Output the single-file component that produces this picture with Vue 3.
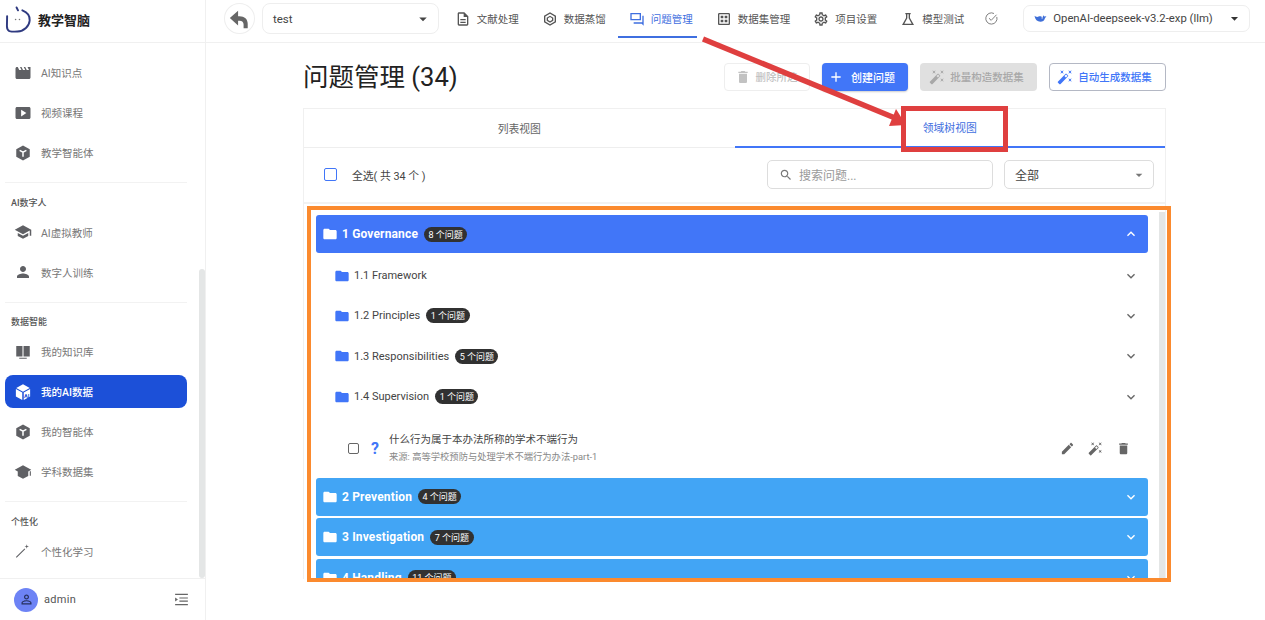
<template>
  <div class="app">
    <aside class="sidebar">
      <div class="brand">
        <svg class="logo" viewBox="0 0 28 28" fill="none">
          <path d="M12 1.5l1.5 3" stroke="#2f3a80" stroke-width="2" stroke-linecap="round" />
          <path d="M18 4.5c5 2 8 6 7.6 10.5C25 21 20 26 13 26.5c-3 .2-6 .2-8.5-.5C2.5 25 2 23.5 2 21l.2-10.5" stroke="#2f3a80" stroke-width="2" stroke-linecap="round" />
          <circle cx="11" cy="14" r=".8" fill="#777" />
          <circle cx="15" cy="14" r=".8" fill="#777" />
        </svg>
        <span class="brand-name">教学智脑</span>
      </div>

      <nav class="side-nav">
        <template v-for="(group, i) in sideGroups" :key="i">
          <div v-if="i > 0" class="side-divider"></div>
          <div v-if="group.title" class="side-title">{{ group.title }}</div>
          <div
            v-for="item in group.items"
            :key="item.label"
            :class="['side-item', { active: item.active }]"
          >
            <svg class="side-icon" viewBox="0 0 24 24" fill="currentColor">
              <path :d="icons[item.icon]" />
              <path v-if="item.icon === 'hex'" d="M7.5 8.5 12 11l4.5-2.5M12 11v6" fill="none" stroke="#fff" stroke-width="2" />
              <text v-if="item.icon === 'cube'" x="13.4" y="20" class="cube-text">AI</text>
            </svg>
            <span>{{ item.label }}</span>
          </div>
        </template>
      </nav>

      <div class="side-scroll"></div>

      <div class="side-footer">
        <div class="avatar">
          <svg viewBox="0 0 24 24" fill="#26305e"><path :d="icons.personOutline" /></svg>
        </div>
        <span class="user-name">admin</span>
        <svg class="collapse" viewBox="0 0 24 24" fill="#666">
          <path d="M3 4h18v1.6H3zM9 9h12v1.6H9zM9 13.5h12v1.6H9zM3 18.4h18V20H3zM3 9.2v5.6l4-2.8z" />
        </svg>
      </div>
    </aside>

    <div class="main">
      <header class="topbar">
        <button class="back-btn">
          <svg viewBox="0 0 24 24" fill="#666"><path :d="icons.reply" /></svg>
        </button>
        <div class="project-select">
          <span>test</span>
          <svg viewBox="0 0 24 24" fill="#444"><path :d="icons.dropdown" /></svg>
        </div>
        <div class="top-tabs">
          <div
            v-for="tab in topTabs"
            :key="tab.label"
            :class="['top-tab', { active: tab.active }]"
          >
            <svg viewBox="0 0 24 24" fill="currentColor" fill-rule="evenodd"><path :d="icons[tab.icon]" /></svg>
            <span>{{ tab.label }}</span>
          </div>
        </div>
        <svg class="check-icon" viewBox="0 0 24 24" fill="none" stroke="#777" stroke-width="1.5">
          <path d="M20.5 9.5A9 9 0 1 1 16 4" />
          <path d="M8 11.5l3.5 3.5L20 6" />
        </svg>
        <div class="model-select">
          <svg class="whale" viewBox="0 0 24 24" fill="#3f6fd8">
            <path d="M1 7c1 7 5 11 11 11 4 0 7-2 8-6 1-2 2-3 3-4l-4 .5-1.5-2.5c-1 2-1 3-2 4-1.5-2-5-3-7-1.5C6 10 3 9 1 7z" />
            <circle cx="15" cy="11" r="1.2" fill="#fff" />
          </svg>
          <span>OpenAI-deepseek-v3.2-exp (llm)</span>
          <svg class="caret" viewBox="0 0 24 24" fill="#333"><path :d="icons.dropdown" /></svg>
        </div>
      </header>

      <section class="content">
        <div class="title-row">
          <h1>问题管理 (34)</h1>
          <div class="actions">
            <button class="btn btn-ghost">
              <svg viewBox="0 0 24 24" fill="currentColor"><path :d="icons.trash" /></svg>删除所选
            </button>
            <button class="btn btn-primary">
              <svg viewBox="0 0 24 24" fill="currentColor"><path :d="icons.plus" /></svg>创建问题
            </button>
            <button class="btn btn-disabled">
              <svg viewBox="0 0 24 24" fill="currentColor"><path :d="icons.wand" /></svg>批量构造数据集
            </button>
            <button class="btn btn-outline">
              <svg viewBox="0 0 24 24" fill="currentColor"><path :d="icons.wand" /></svg>自动生成数据集
            </button>
          </div>
        </div>

        <div class="card">
          <div class="view-tabs">
            <div class="view-tab">列表视图</div>
            <div class="view-tab active">领域树视图</div>
          </div>

          <div class="toolbar">
            <span class="check-all"></span>
            <span class="all-label">全选( 共 34 个 )</span>
            <div class="search">
              <svg viewBox="0 0 24 24" fill="#777"><path :d="icons.search" /></svg>
              <span>搜索问题...</span>
            </div>
            <div class="filter">
              <span>全部</span>
              <svg viewBox="0 0 24 24" fill="#777"><path :d="icons.dropdown" /></svg>
            </div>
          </div>

          <div class="tree">
            <div class="tree-scroll"></div>

            <div class="acc-head open">
              <svg class="folder" viewBox="0 0 24 24" fill="currentColor"><path :d="icons.folder" /></svg>
              <span class="acc-name">1 Governance</span>
              <span class="chip">8 个问题</span>
              <svg class="chev" viewBox="0 0 24 24" fill="currentColor"><path :d="icons.less" /></svg>
            </div>

            <div v-for="sub in subNodes" :key="sub.name" class="sub-row">
              <svg class="folder" viewBox="0 0 24 24" fill="currentColor"><path :d="icons.folder" /></svg>
              <span class="sub-name">{{ sub.name }}</span>
              <span v-if="sub.count" class="chip">{{ sub.count }} 个问题</span>
              <svg class="chev" viewBox="0 0 24 24" fill="currentColor"><path :d="icons.more" /></svg>
            </div>

            <div class="question">
              <span class="q-check"></span>
              <span class="q-mark">?</span>
              <div class="q-body">
                <div class="q-text">什么行为属于本办法所称的学术不端行为</div>
                <div class="q-source">来源: 高等学校预防与处理学术不端行为办法-part-1</div>
              </div>
              <div class="q-actions">
                <svg viewBox="0 0 24 24" fill="currentColor"><path :d="icons.pencil" /></svg>
                <svg viewBox="0 0 24 24" fill="currentColor"><path :d="icons.wand" /></svg>
                <svg viewBox="0 0 24 24" fill="currentColor"><path :d="icons.trash" /></svg>
              </div>
            </div>

            <div v-for="node in closedNodes" :key="node.name" class="acc-head">
              <svg class="folder" viewBox="0 0 24 24" fill="currentColor"><path :d="icons.folder" /></svg>
              <span class="acc-name">{{ node.name }}</span>
              <span class="chip">{{ node.count }} 个问题</span>
              <svg class="chev" viewBox="0 0 24 24" fill="currentColor"><path :d="icons.more" /></svg>
            </div>
          </div>
        </div>
      </section>
    </div>

    <!-- annotations drawn on top of the screenshot -->
    <svg class="arrow" viewBox="0 0 1265 620">
      <path d="M703 39 895 118" stroke="#df3f3f" stroke-width="5.5" fill="none" />
      <path d="M906 125 889 126 896 109z" fill="#df3f3f" />
    </svg>
    <div class="mark-red"></div>
    <div class="mark-orange"></div>
  </div>
</template>

<script setup>
const icons = {
  movie: 'M18 4l2 4h-3l-2-4h-2l2 4h-3l-2-4H8l2 4H7L5 4H4c-1.1 0-1.99.9-1.99 2L2 18c0 1.1.9 2 2 2h16c1.1 0 2-.9 2-2V4h-4z',
  video: 'M20 4H4c-1.1 0-2 .9-2 2v12c0 1.1.9 2 2 2h16c1.1 0 2-.9 2-2V6c0-1.1-.9-2-2-2zM9.5 16.5v-9l7 4.5-7 4.5z',
  hex: 'M12 2 3 7v10l9 5 9-5V7z',
  school: 'M5 13.18v4L12 21l7-3.82v-4L12 17l-7-3.82zM12 3L1 9l11 6 9-4.91V17h2V9L12 3z',
  person: 'M12 12c2.21 0 4-1.79 4-4s-1.79-4-4-4-4 1.79-4 4 1.79 4 4 4zm0 2c-2.67 0-8 1.34-8 4v2h16v-2c0-2.66-5.33-4-8-4z',
  book: 'M3 4h8.3v14H3zM12.7 4H21v14h-8.3zM7 19.5h10V21H7z',
  cube: 'M12 1.5 3 6.5l9 5 9-5zM2.5 8v10l8.5 4.5v-10zM21.5 8 13 12.5v10l8.5-4.5z',
  cap: 'M12 3 1 9l4 2.2v6L12 21l7-3.8v-6L23 9zM21 11v6h1.5v-6z',
  wandThin: 'M3.5 21 2.5 20 14 8.5l1 1zM17 3l.7 2.3L20 6l-2.3.7L17 9l-.7-2.3L14 6l2.3-.7z',
  wand: 'M7.5 5.6L10 7 8.6 4.5 10 2 7.5 3.4 5 2l1.4 2.5L5 7zm12 9.8L17 14l1.4 2.5L17 19l2.5-1.4L22 19l-1.4-2.5L22 14zM22 2l-2.5 1.4L17 2l1.4 2.5L17 7l2.5-1.4L22 7l-1.4-2.5zm-7.63 5.29c-.39-.39-1.02-.39-1.41 0L1.29 18.96c-.39.39-.39 1.02 0 1.41l2.34 2.34c.39.39 1.02.39 1.41 0L16.7 11.05c.39-.39.39-1.02 0-1.41l-2.33-2.35zm-1.03 5.49l-2.12-2.12 2.44-2.44 2.12 2.12-2.44 2.44z',
  personOutline: 'M12 5.9c1.16 0 2.1.94 2.1 2.1s-.94 2.1-2.1 2.1S9.9 9.16 9.9 8s.94-2.1 2.1-2.1m0 9c2.97 0 6.1 1.46 6.1 2.1v1.1H5.9V17c0-.64 3.13-2.1 6.1-2.1M12 4C9.79 4 8 5.79 8 8s1.79 4 4 4 4-1.79 4-4-1.79-4-4-4zm0 9c-2.67 0-8 1.34-8 4v3h16v-3c0-2.66-5.33-4-8-4z',
  reply: 'M11 3 2 11l9 8v-5h1.5c3 0 4.5 1.5 4.5 4v4h4.5v-4.5c0-5.5-3.5-8.5-9-8.5H11z',
  dropdown: 'M7 10l5 5 5-5z',
  doc: 'M14 2H6c-1.1 0-2 .9-2 2v16c0 1.1.9 2 2 2h12c1.1 0 2-.9 2-2V8l-6-6zm4 18H6V4h7v5h5v11zM8 12h8v2H8zm0 4h8v2H8z',
  box: 'M12 2 3 7v10l9 5 9-5V7zM12 4.3 19 8.2v7.6l-7 3.9-7-3.9V8.2zM12 7l-5 3v4.5l5 3 5-3V10zM12 9l-3 2v2.5l3 2 3-2V11z',
  chat: 'M2 3h16v11H2zm2 2v7h12V5zM20 7h2v15l-3-3H7v-2h13z',
  grid: 'M19 3H5c-1.1 0-2 .9-2 2v14c0 1.1.9 2 2 2h14c1.1 0 2-.9 2-2V5c0-1.1-.9-2-2-2zm0 16H5V5h14zM7 7h4v4H7zm6 0h4v4h-4zm-6 6h4v4H7zm6 0h4v4h-4z',
  gear: 'M19.43 12.98c.04-.32.07-.64.07-.98 0-.34-.03-.66-.07-.98l2.11-1.65c.19-.15.24-.42.12-.64l-2-3.46c-.09-.16-.26-.25-.44-.25-.06 0-.12.01-.17.03l-2.49 1c-.52-.4-1.08-.73-1.69-.98l-.38-2.65C14.46 2.18 14.25 2 14 2h-4c-.25 0-.46.18-.49.42l-.38 2.65c-.61.25-1.17.59-1.69.98l-2.49-1c-.06-.02-.12-.03-.18-.03-.17 0-.34.09-.43.25l-2 3.46c-.13.22-.07.49.12.64l2.11 1.65c-.04.32-.07.65-.07.98 0 .33.03.66.07.98l-2.11 1.65c-.19.15-.24.42-.12.64l2 3.46c.09.16.26.25.44.25.06 0 .12-.01.17-.03l2.49-1c.52.4 1.08.73 1.69.98l.38 2.65c.03.24.24.42.49.42h4c.25 0 .46-.18.49-.42l.38-2.65c.61-.25 1.17-.59 1.69-.98l2.49 1c.06.02.12.03.18.03.17 0 .34-.09.43-.25l2-3.46c.12-.22.07-.49-.12-.64l-2.11-1.65zm-1.98-1.71c.04.31.05.52.05.73 0 .21-.02.43-.05.73l-.14 1.13.89.7 1.08.84-.7 1.21-1.27-.51-1.04-.42-.9.68c-.43.32-.84.56-1.25.73l-1.06.43-.16 1.13-.2 1.35h-1.4l-.19-1.35-.16-1.13-1.06-.43c-.43-.18-.83-.41-1.23-.71l-.91-.7-1.06.43-1.27.51-.7-1.21 1.08-.84.89-.7-.14-1.13c-.03-.31-.05-.54-.05-.74s.02-.43.05-.73l.14-1.13-.89-.7-1.08-.84.7-1.21 1.27.51 1.04.42.9-.68c.43-.32.84-.56 1.25-.73l1.06-.43.16-1.13.2-1.35h1.39l.19 1.35.16 1.13 1.06.43c.43.18.83.41 1.23.71l.91.7 1.06-.43 1.27-.51.7 1.21-1.07.85-.89.7.14 1.13zM12 8c-2.21 0-4 1.79-4 4s1.79 4 4 4 4-1.79 4-4-1.79-4-4-4zm0 6c-1.1 0-2-.9-2-2s.9-2 2-2 2 .9 2 2-.9 2-2 2z',
  flask: 'M8 3h8v2h-1v5.5L21 21H3l6-10.5V5H8zm3 2v6l-4.5 8h11L13 11V5z',
  trash: 'M6 19c0 1.1.9 2 2 2h8c1.1 0 2-.9 2-2V7H6v12zM19 4h-3.5l-1-1h-5l-1 1H5v2h14V4z',
  plus: 'M19 13h-6v6h-2v-6H5v-2h6V5h2v6h6v2z',
  search: 'M15.5 14h-.79l-.28-.27C15.41 12.59 16 11.11 16 9.5 16 5.91 13.09 3 9.5 3S3 5.91 3 9.5 5.91 16 9.5 16c1.61 0 3.09-.59 4.23-1.57l.27.28v.79l5 4.99L20.49 19l-4.99-5zm-6 0C7.01 14 5 11.99 5 9.5S7.01 5 9.5 5 14 7.01 14 9.5 11.99 14 9.5 14z',
  folder: 'M10 4H4c-1.1 0-1.99.9-1.99 2L2 18c0 1.1.9 2 2 2h16c1.1 0 2-.9 2-2V8c0-1.1-.9-2-2-2h-8l-2-2z',
  less: 'M12 8l-6 6 1.41 1.41L12 10.83l4.59 4.58L18 14z',
  more: 'M16.59 8.59 12 13.17 7.41 8.59 6 10l6 6 6-6z',
  pencil: 'M3 17.25V21h3.75L17.81 9.94l-3.75-3.75L3 17.25zM20.71 7.04c.39-.39.39-1.02 0-1.41l-2.34-2.34c-.39-.39-1.02-.39-1.41 0l-1.83 1.83 3.75 3.75 1.83-1.83z'
};

const sideGroups = [
  {
    items: [
      { label: 'AI知识点', icon: 'movie' },
      { label: '视频课程', icon: 'video' },
      { label: '教学智能体', icon: 'hex' }
    ]
  },
  {
    title: 'AI数字人',
    items: [
      { label: 'AI虚拟教师', icon: 'school' },
      { label: '数字人训练', icon: 'person' }
    ]
  },
  {
    title: '数据智能',
    items: [
      { label: '我的知识库', icon: 'book' },
      { label: '我的AI数据', icon: 'cube', active: true },
      { label: '我的智能体', icon: 'hex' },
      { label: '学科数据集', icon: 'cap' }
    ]
  },
  {
    title: '个性化',
    items: [{ label: '个性化学习', icon: 'wandThin' }]
  }
];

const topTabs = [
  { label: '文献处理', icon: 'doc' },
  { label: '数据蒸馏', icon: 'box' },
  { label: '问题管理', icon: 'chat', active: true },
  { label: '数据集管理', icon: 'grid' },
  { label: '项目设置', icon: 'gear' },
  { label: '模型测试', icon: 'flask' }
];

const subNodes = [
  { name: '1.1 Framework' },
  { name: '1.2 Principles', count: 1 },
  { name: '1.3 Responsibilities', count: 5 },
  { name: '1.4 Supervision', count: 1 }
];

const closedNodes = [
  { name: '2 Prevention', count: 4 },
  { name: '3 Investigation', count: 7 },
  { name: '4 Handling', count: 11 }
];
</script>

<style>
html,
body {
  margin: 0;
  background: #fff;
  overflow: hidden;
}
</style>

<style scoped>
.app {
  position: relative;
  display: flex;
  height: 620px;
  overflow: hidden;
  background: #fff;
  font-family: Roboto, "Noto Sans CJK SC", sans-serif;
  color: #333;
}

/* sidebar */
.sidebar {
  position: relative;
  flex: 0 0 205px;
  display: flex;
  flex-direction: column;
  border-right: 1px solid #f0f0f0;
}

.brand {
  flex: 0 0 43px;
  display: flex;
  align-items: center;
  gap: 6px;
  padding: 0 0 3px 5px;
  border-bottom: 1px solid #f0f0f0;
  box-sizing: border-box;
}

.logo {
  width: 27px;
  height: 27px;
}

.brand-name {
  font-size: 13px;
  font-weight: 700;
  color: #222;
}

.side-nav {
  flex: 1;
  padding-top: 13px;
  overflow: hidden;
}

.side-item {
  display: flex;
  align-items: center;
  gap: 9px;
  height: 33px;
  margin: 0 18px 7px 5px;
  padding-left: 9px;
  border-radius: 8px;
  font-size: 10.5px;
  color: #777;
}

.side-item.active {
  background: #1c50d8;
  color: #fff;
  font-weight: 500;
}

.side-icon {
  width: 18px;
  height: 18px;
  color: #5f6064;
  flex: none;
}

.side-item.active .side-icon {
  color: #fff;
}

.cube-text {
  font-size: 7.5px;
  font-weight: 700;
  fill: #1c50d8;
}

.side-divider {
  height: 1px;
  margin: 13px 18px 12.5px 5px;
  background: #f2f2f2;
}

.side-title {
  height: 14px;
  margin-bottom: 6px;
  padding-left: 11px;
  font-size: 9px;
  line-height: 14px;
  color: #555;
  font-weight: 500;
}

.side-scroll {
  position: absolute;
  right: 0;
  top: 269px;
  bottom: 42px;
  width: 6px;
  border-radius: 3px;
  background: #e4e6e6;
}

.side-footer {
  flex: 0 0 42px;
  display: flex;
  align-items: center;
  padding: 0 15px 0 14px;
  border-top: 1px solid #f0f0f0;
  box-sizing: border-box;
}

.avatar {
  width: 24px;
  height: 24px;
  border-radius: 50%;
  background: #6d83f5;
  display: flex;
  align-items: center;
  justify-content: center;
}

.avatar svg {
  width: 15px;
  height: 15px;
}

.user-name {
  margin-left: 6px;
  font-size: 11px;
  color: #555;
  letter-spacing: .3px;
}

.collapse {
  width: 17px;
  height: 17px;
  margin-left: auto;
}

/* top bar */
.main {
  flex: 1;
  min-width: 0;
  display: flex;
  flex-direction: column;
}

.topbar {
  flex: 0 0 43px;
  box-sizing: border-box;
  display: flex;
  align-items: center;
  padding: 0 15px 5px 18px;
  border-bottom: 1px solid #f0f0f0;
}

.back-btn {
  width: 31px;
  height: 31px;
  padding: 0;
  border: 1px solid #eee;
  border-radius: 50%;
  background: #fff;
  display: flex;
  align-items: center;
  justify-content: center;
}

.back-btn svg {
  width: 22px;
  height: 22px;
}

.project-select {
  width: 177px;
  height: 31px;
  box-sizing: border-box;
  margin-left: 7px;
  padding: 0 6px 0 10px;
  display: flex;
  align-items: center;
  justify-content: space-between;
  border: 1px solid #eee;
  border-radius: 8px;
  font-size: 11.5px;
  color: #444;
}

.project-select svg {
  width: 18px;
  height: 18px;
}

.top-tabs {
  display: flex;
  gap: 8px;
  margin-left: 5px;
  align-self: stretch;
  margin-bottom: -5px;
}

.top-tab {
  box-sizing: border-box;
  height: 38px;
  padding: 1px 4px 0 11px;
  display: flex;
  align-items: center;
  gap: 6px;
  font-size: 10.5px;
  color: #555;
  border-bottom: 2px solid transparent;
  white-space: nowrap;
}

.top-tab svg {
  width: 16px;
  height: 16px;
  flex: none;
}

.top-tab.active {
  color: #3f6fe0;
  border-bottom-color: #3f6fe0;
}

.check-icon {
  width: 15px;
  height: 15px;
  margin-left: 16px;
}

.model-select {
  width: 227px;
  height: 27px;
  box-sizing: border-box;
  margin-left: 24px;
  padding: 0 6px 0 10px;
  display: flex;
  align-items: center;
  border: 1px solid #eee;
  border-radius: 7px;
  font-size: 11.3px;
  color: #444;
  white-space: nowrap;
}

.whale {
  width: 13px;
  height: 13px;
  margin-right: 6px;
  flex: none;
}

.caret {
  width: 17px;
  height: 17px;
  margin-left: auto;
}

/* page */
.content {
  flex: 1;
  min-height: 0;
  padding: 0 99px 0 97px;
}

.title-row {
  height: 65px;
  display: flex;
  align-items: center;
  justify-content: space-between;
}

.title-row h1 {
  margin: -3px 0 0;
  font-size: 25.5px;
  font-weight: 400;
  color: #222;
  white-space: nowrap;
}

.actions {
  display: flex;
  gap: 12px;
  margin-top: 2px;
}

.btn {
  height: 28px;
  box-sizing: border-box;
  padding: 0;
  display: flex;
  align-items: center;
  justify-content: center;
  gap: 5px;
  border-radius: 4px;
  border: 1px solid transparent;
  font-family: inherit;
  font-size: 10.5px;
  font-weight: 500;
  white-space: nowrap;
}

.btn svg {
  width: 16px;
  height: 16px;
}

.btn-ghost {
  width: 86px;
  padding-right: 2px;
  border-color: #eee;
  background: #fff;
  color: #c2c2c2;
}

.btn-primary {
  width: 86px;
  justify-content: flex-start;
  padding-left: 5px;
  gap: 7px;
  font-size: 11px;
  background: #4176f8;
  color: #fff;
  box-shadow: 0 1px 2px rgba(0, 0, 0, .2);
}

.btn-disabled {
  width: 117px;
  padding-right: 4px;
  background: #e0e0e0;
  color: #a8a8a8;
}

.btn-outline {
  width: 117px;
  padding-right: 6px;
  border-color: #b4b8c4;
  background: #fff;
  color: #4176f8;
}

.card {
  border: 1px solid #f0f0f0;
  border-bottom: 0;
}

.view-tabs {
  display: flex;
  height: 38px;
  border-bottom: 1px solid #eee;
}

.view-tab {
  flex: 1;
  display: flex;
  align-items: center;
  justify-content: center;
  padding-bottom: 1px;
  font-size: 10.8px;
  color: #666;
  box-sizing: border-box;
}

.view-tab.active {
  color: #3f6fe0;
  border-bottom: 2px solid #4176f8;
  height: 39px;
}

.toolbar {
  height: 56px;
  box-sizing: border-box;
  display: flex;
  align-items: center;
  padding: 0 11px 1px 20px;
  border-bottom: 2px solid #f2f2f2;
}

.check-all {
  width: 13px;
  height: 13px;
  border: 1.5px solid #4176f8;
  border-radius: 2px;
  box-sizing: border-box;
}

.all-label {
  margin-left: 15px;
  font-size: 10.8px;
  color: #444;
}

.search {
  width: 226px;
  height: 29px;
  box-sizing: border-box;
  margin-left: auto;
  padding-left: 11px;
  display: flex;
  align-items: center;
  gap: 6px;
  border: 1px solid #ddd;
  border-radius: 5px;
  font-size: 12px;
  color: #9a9a9a;
}

.search svg {
  width: 14px;
  height: 14px;
}

.filter {
  width: 150px;
  height: 29px;
  box-sizing: border-box;
  margin-left: 11px;
  padding: 0 6px 0 10px;
  display: flex;
  align-items: center;
  justify-content: space-between;
  border: 1px solid #ddd;
  border-radius: 5px;
  font-size: 12px;
  color: #444;
}

.filter svg {
  width: 16px;
  height: 16px;
}

/* tree */
.tree {
  position: relative;
  height: 375px;
  overflow: hidden;
  box-sizing: border-box;
  padding: 11px 17px 0 12px;
}

.tree-scroll {
  position: absolute;
  top: 8px;
  right: 0;
  bottom: 0;
  width: 6px;
  background: #e4e6e6;
}

.acc-head {
  height: 38px;
  box-sizing: border-box;
  margin-bottom: 2.5px;
  padding: 0 9px 0 6px;
  display: flex;
  align-items: center;
  border-radius: 3px;
  background: #42a5f5;
  color: #fff;
}

.acc-head.open {
  background: #4176f8;
}

.acc-head .folder {
  width: 16px;
  height: 16px;
  margin-right: 4px;
}

.acc-name {
  font-size: 12px;
  font-weight: 700;
  letter-spacing: .15px;
}

.chip {
  margin-left: 6px;
  height: 15px;
  padding: 0 4.5px;
  display: inline-flex;
  align-items: center;
  border-radius: 8px;
  background: #313131;
  color: #fff;
  font-size: 9px;
  white-space: nowrap;
}

.chev {
  width: 16px;
  height: 16px;
  margin-left: auto;
}

.sub-row {
  height: 40.3px;
  box-sizing: border-box;
  padding: 0 9px 0 18px;
  display: flex;
  align-items: center;
  color: #666;
}

.sub-row .folder {
  width: 16px;
  height: 16px;
  margin-right: 4px;
  color: #4176f8;
}

.sub-name {
  font-size: 11px;
  color: #444;
}

.question {
  height: 61px;
  box-sizing: border-box;
  padding: 2px 17px 0 32px;
  display: flex;
  align-items: center;
}

.q-check {
  width: 11px;
  height: 11px;
  border: 1.5px solid #666;
  border-radius: 2px;
  box-sizing: border-box;
}

.q-mark {
  margin-left: 12px;
  width: 17px;
  font-size: 16px;
  font-weight: 700;
  color: #4176f8;
}

.q-body {
  flex: 1;
  margin-left: 1px;
}

.q-text {
  font-size: 10.5px;
  line-height: 16px;
  color: #444;
}

.q-source {
  font-size: 9.3px;
  line-height: 17px;
  color: #888;
}

.q-actions {
  display: flex;
  gap: 13px;
  color: #666;
}

.q-actions svg {
  width: 15px;
  height: 15px;
}

/* annotations */
.arrow {
  position: absolute;
  inset: 0;
  width: 1265px;
  height: 620px;
  pointer-events: none;
}

.mark-red {
  position: absolute;
  left: 901px;
  top: 106px;
  width: 107px;
  height: 46px;
  box-sizing: border-box;
  border: 5px solid #df3f3f;
}

.mark-orange {
  position: absolute;
  left: 307px;
  top: 206px;
  width: 864px;
  height: 376px;
  box-sizing: border-box;
  border: 4px solid #fb8a2e;
}
</style>
